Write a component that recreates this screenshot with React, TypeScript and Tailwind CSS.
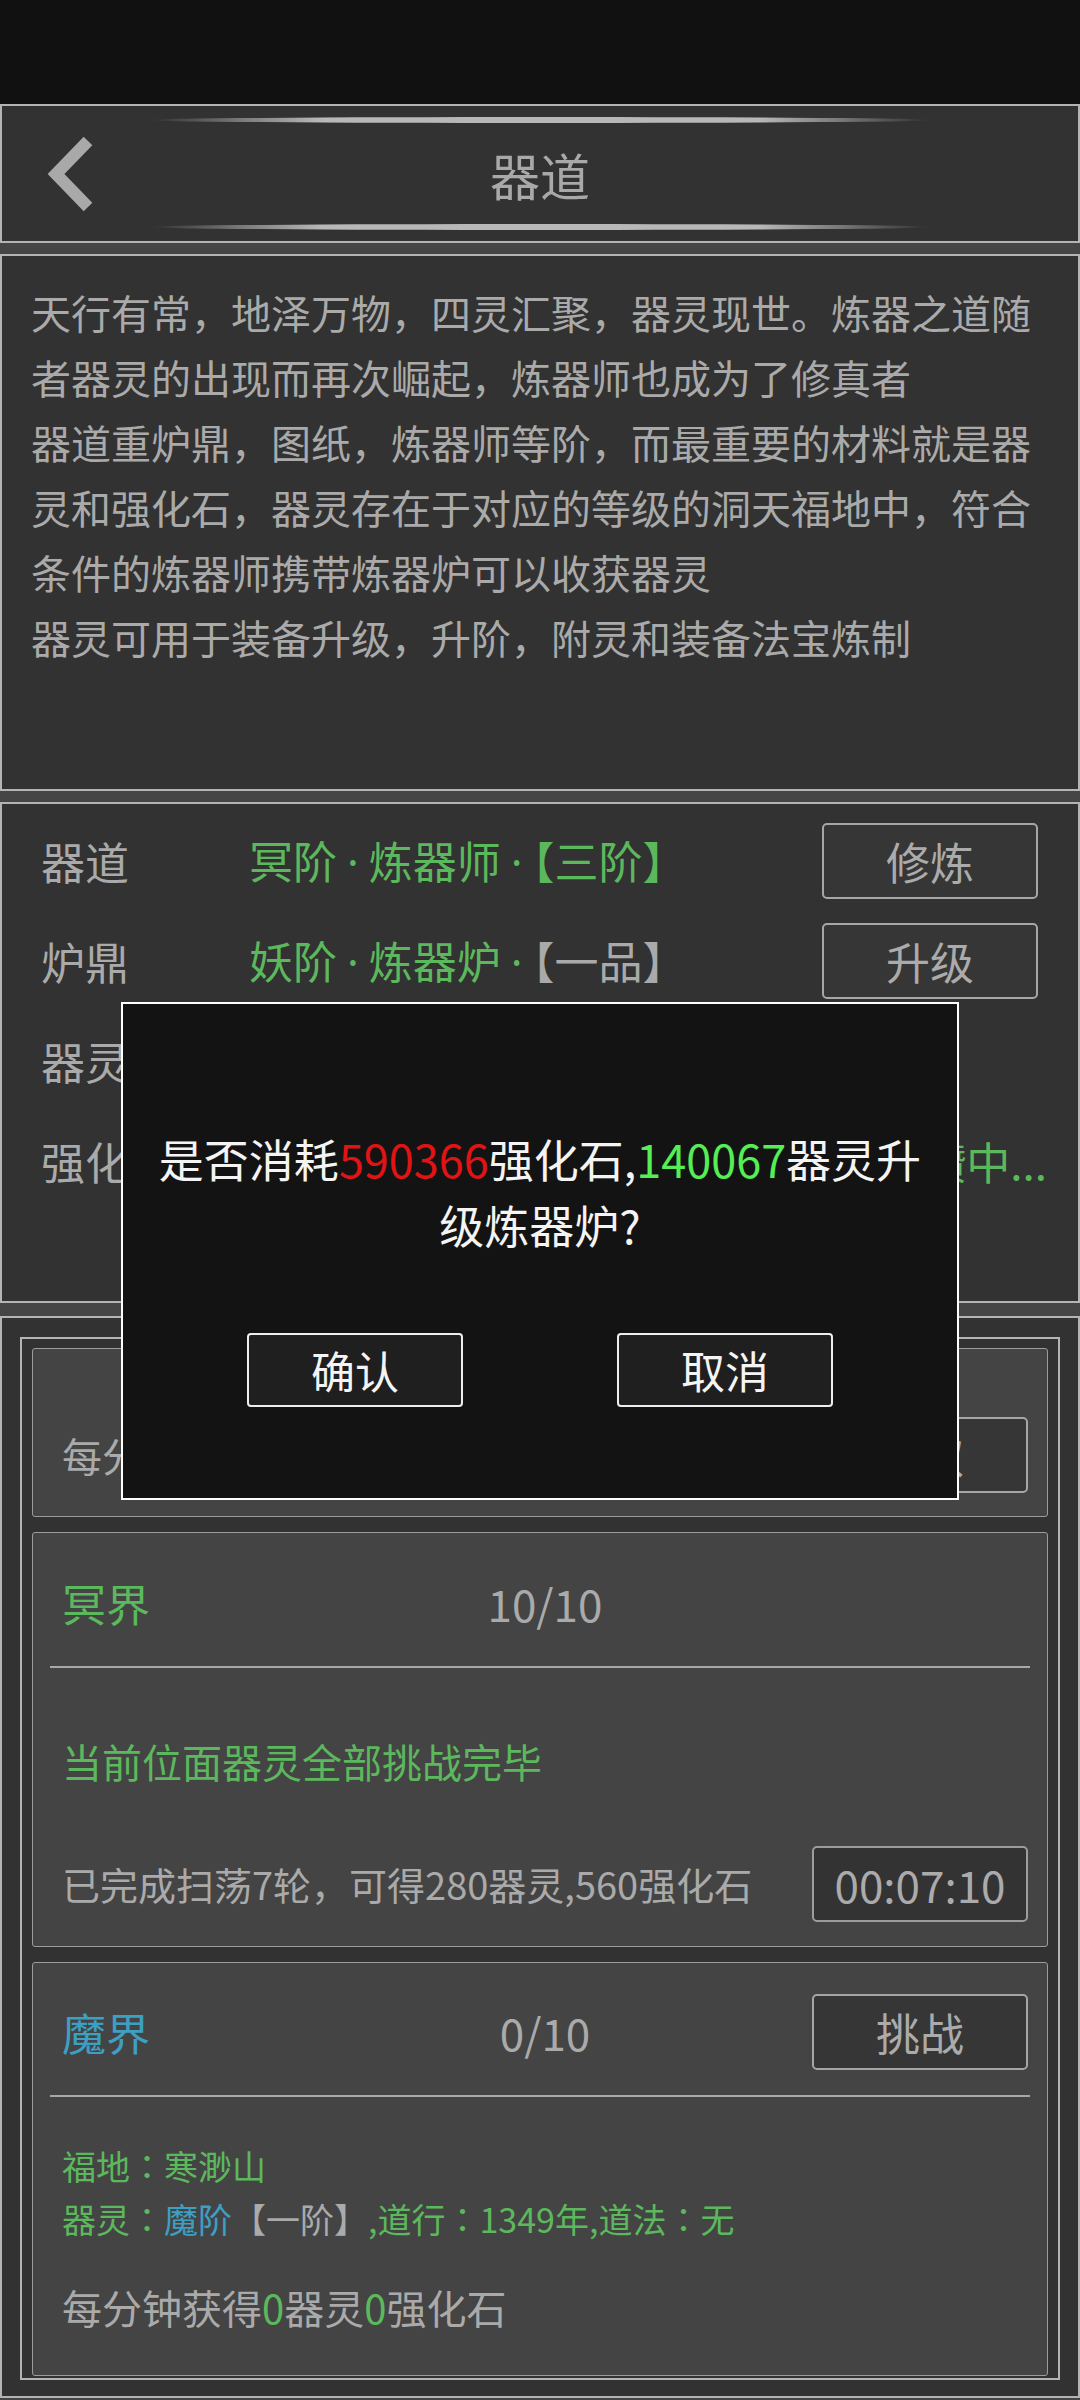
import React from 'react';

const Btn = ({ label }: { label: string }) => (
  <div className="flex h-[76px] w-[216px] shrink-0 items-center justify-center rounded-[5px] border-2 border-[#a6a6a6] bg-[#363636] text-[44px] leading-none text-[#ababab]">
    {label}
  </div>
);

const StatRow = ({ label, children, action }: { label: string; children?: React.ReactNode; action?: string }) => (
  <div className="flex h-[100px] items-center">
    <div className="w-[208px] shrink-0 whitespace-nowrap text-[44px] leading-none text-[#aaaaaa]">{label}</div>
    <div className="min-w-0 flex-1 whitespace-nowrap text-[44px] leading-none">{children}</div>
    {action && <Btn label={action} />}
  </div>
);

// narrow middle dot, as the device font draws it
const Dot = () => <span className="px-[10px] font-['Noto_Sans',sans-serif]">·</span>;
// centred full-width colon
const Colon = () => <span className="font-['Noto_Sans_CJK_JP',sans-serif]">：</span>;

const Divider = () => <div className="mx-[17px] mt-[25px] h-[2px] bg-[#a8a8a8]" />;

const App = () => {
  return (
    <div className="relative h-[2400px] w-[1080px] overflow-hidden bg-[#111111] font-['Noto_Sans_CJK_SC','Noto_Sans',sans-serif]">
      <div className="h-[104px] bg-[#111111]" />
      <div className="flex h-[2296px] flex-col bg-[#454545]">
        {/* header */}
        <header className="relative flex h-[139px] flex-col items-center border-2 border-[#b4b4b4] bg-[#323232] pt-[11px] pb-[11px]">
          <svg className="absolute left-[40px] top-[29px]" width="60" height="80" viewBox="0 0 60 80">
            <polyline points="46,6 14,39 46,72" fill="none" stroke="#a9a9a9" strokeWidth="12" strokeLinejoin="miter" strokeLinecap="butt" />
          </svg>
          <div className="h-[6px] w-[780px] rounded-[50%] bg-[linear-gradient(90deg,rgba(180,180,180,0),#b8b8b8_22%,#b8b8b8_78%,rgba(180,180,180,0))]" />
          <div className="flex flex-1 items-center text-[50px] leading-none text-[#a9a9a9]">器道</div>
          <div className="h-[6px] w-[780px] rounded-[50%] bg-[linear-gradient(90deg,rgba(180,180,180,0),#b8b8b8_22%,#b8b8b8_78%,rgba(180,180,180,0))]" />
        </header>

        {/* description */}
        <section className="mt-[11px] h-[537px] border-2 border-[#b4b4b4] bg-[#323232] px-[29px] pt-[24px] text-[40px] leading-[65px] text-[#aaaaaa]">
          <p>天行有常，地泽万物，四灵汇聚，器灵现世。炼器之道随者器灵的出现而再次崛起，炼器师也成为了修真者</p>
          <p>器道重炉鼎，图纸，炼器师等阶，而最重要的材料就是器灵和强化石，器灵存在于对应的等级的洞天福地中，符合条件的炼器师携带炼器炉可以收获器灵</p>
          <p>器灵可用于装备升级，升阶，附灵和装备法宝炼制</p>
        </section>

        {/* stats */}
        <section className="mt-[11px] h-[501px] border-2 border-[#b4b4b4] bg-[#323232] pl-[39px] pr-[40px] pt-[7px]">
          <StatRow label="器道" action="修炼">
            <span className="text-[#5cb85c]">
              冥阶<Dot />炼器师<Dot />【三阶】
            </span>
          </StatRow>
          <StatRow label="炉鼎" action="升级">
            <span className="text-[#5cb85c]">
              妖阶<Dot />炼器炉<Dot />
            </span>
            <span className="text-[#aaaaaa]">【一品】</span>
          </StatRow>
          <StatRow label="器灵">
            <span className="text-[#5cb85c]">妖阶器灵×12</span>
          </StatRow>
          <StatRow label="强化石">
            <div className="-mr-[9px] text-right text-[#5cb85c]">强化石积攒中...</div>
          </StatRow>
        </section>

        {/* realms */}
        <section className="mt-[13px] h-[1082px] border-2 border-[#b4b4b4] bg-[#323232] px-[18px] pt-[19px] pb-[16px]">
          <div className="flex h-full flex-col gap-[15px] overflow-hidden border-2 border-[#b4b4b4] px-[10px] pt-[9px]">
            {/* card 1 */}
            <div className="shrink-0 rounded-[3px] border border-[#9c9c9c] bg-[#444444] pl-[29px] pr-[19px] pt-[68px] pb-[23px]">
              <div className="flex h-[76px] items-center justify-between">
                <div className="text-[40px] leading-none text-[#aaaaaa]">
                  每分钟获得<span className="text-[#5cb85c]">8</span>器灵<span className="text-[#5cb85c]">16</span>强化石
                </div>
                <Btn label="领取" />
              </div>
            </div>

            {/* card 2 */}
            <div className="shrink-0 rounded-[3px] border border-[#9c9c9c] bg-[#444444] pt-[32px] pb-[24px]">
              <div className="grid h-[76px] grid-cols-[1fr_auto_1fr] items-center pl-[29px] pr-[19px]">
                <div className="text-[44px] leading-none text-[#5cb85c]">冥界</div>
                <div className="text-[44px] leading-none text-[#aaaaaa]">10/10</div>
                <div />
              </div>
              <Divider />
              <div className="mt-[69px] pl-[29px] text-[40px] leading-[48px] text-[#5cb85c]">当前位面器灵全部挑战完毕</div>
              <div className="mt-[61px] flex h-[76px] items-center justify-between pl-[29px] pr-[19px]">
                <div className="text-[38px] leading-none text-[#aaaaaa]">已完成扫荡7轮，可得280器灵,560强化石</div>
                <div className="flex h-[76px] w-[216px] items-center justify-center rounded-[5px] border-2 border-[#9c9c9c] bg-[#333333] text-[44px] leading-none text-[#ababab]">
                  00:07:10
                </div>
              </div>
            </div>

            {/* card 3 */}
            <div className="shrink-0 rounded-[3px] border border-[#9c9c9c] bg-[#444444] pt-[31px] pb-[44px]">
              <div className="grid h-[76px] grid-cols-[1fr_auto_1fr] items-center pl-[29px] pr-[19px]">
                <div className="text-[44px] leading-none text-[#3d9fc2]">魔界</div>
                <div className="text-[44px] leading-none text-[#aaaaaa]">0/10</div>
                <div className="justify-self-end">
                  <Btn label="挑战" />
                </div>
              </div>
              <Divider />
              <div className="mt-[42px] pl-[29px] text-[34px] leading-[53px] text-[#5cb85c]">
                <div>
                  福地<Colon />寒渺山
                </div>
                <div>
                  器灵<Colon />
                  <span className="text-[#3d9fc2]">魔阶</span>
                  <span className="text-[#aaaaaa]">【一阶】</span>,道行<Colon />1349年,道法<Colon />无
                </div>
              </div>
              <div className="mt-[38px] pl-[29px] text-[40px] leading-[48px] text-[#aaaaaa]">
                每分钟获得<span className="text-[#5cb85c]">0</span>器灵<span className="text-[#5cb85c]">0</span>强化石
              </div>
            </div>
          </div>
        </section>
      </div>

      {/* confirm dialog */}
      <div className="absolute left-[121px] top-[1002px] h-[498px] w-[838px] border-2 border-white bg-[#131313] px-[26px] pt-[122px]">
        <p className="text-center text-[45px] leading-[66px] text-[#f4f4f4]">
          是否消耗<span className="text-[#e01414]">590366</span>强化石,<span className="text-[#55ee55]">140067</span>器灵升级炼器炉?
        </p>
        <div className="mt-[75px] flex justify-center gap-[154px]">
          <div className="flex h-[74px] w-[216px] items-center justify-center rounded-[4px] border-2 border-[#eeeeee] bg-[#1f1f1f] text-[44px] leading-none text-[#f4f4f4]">确认</div>
          <div className="flex h-[74px] w-[216px] items-center justify-center rounded-[4px] border-2 border-[#eeeeee] bg-[#1f1f1f] text-[44px] leading-none text-[#f4f4f4]">取消</div>
        </div>
      </div>
    </div>
  );
};

export default App;
